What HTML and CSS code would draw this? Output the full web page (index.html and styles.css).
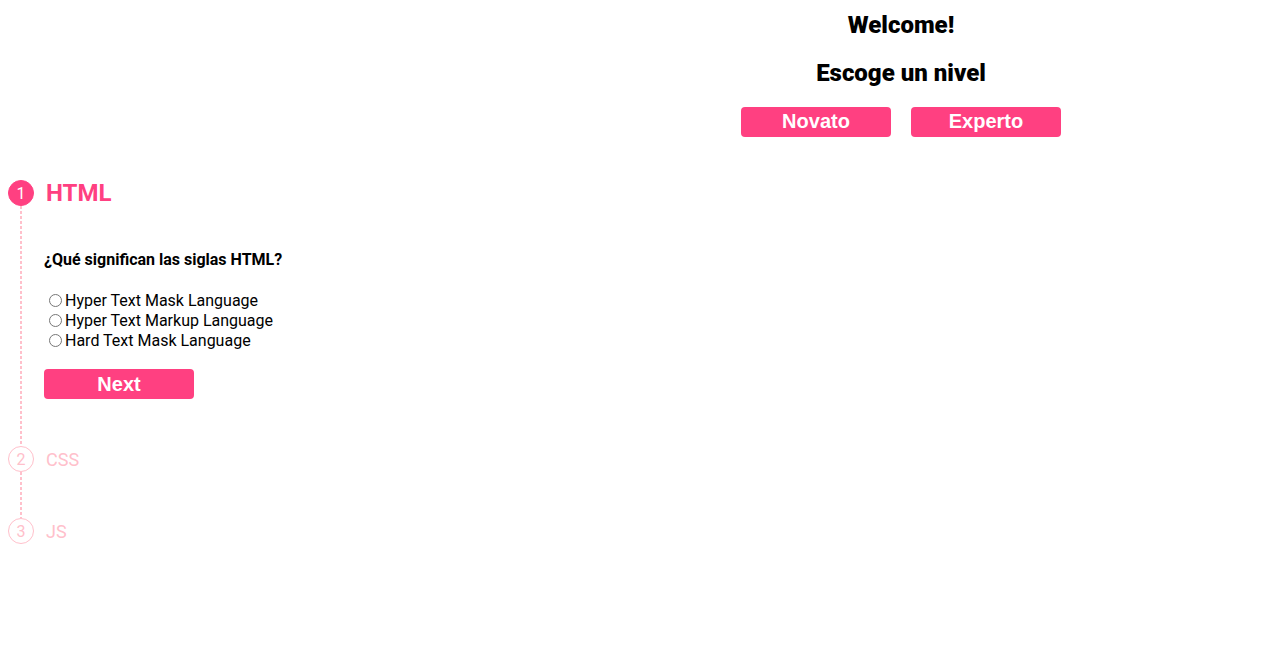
FILE: index.html
```html
<!DOCTYPE html>
<html lang="es">
<head>
<meta charset="utf-8">
<title>Quiz</title>
<link rel="stylesheet" href="styles.css">
</head>
<body>
<header class="welcome">
  <h1 class="title">Welcome!</h1>
  <h2 class="subtitle">Escoge un nivel</h2>
  <div class="levels">
    <button class="btn">Novato</button>
    <button class="btn">Experto</button>
  </div>
</header>
<section class="stepper">
  <div class="step active">
    <div class="step-head">
      <span class="step-num">1</span>
      <span class="step-label">HTML</span>
    </div>
    <div class="step-body">
      <p class="question">¿Qué significan las siglas HTML?</p>
      <div class="options">
        <label class="option"><input type="radio" name="q1">Hyper Text Mask Language</label>
        <label class="option"><input type="radio" name="q1">Hyper Text Markup Language</label>
        <label class="option"><input type="radio" name="q1">Hard Text Mask Language</label>
      </div>
      <button class="btn btn-next">Next</button>
    </div>
  </div>
  <div class="step">
    <div class="step-head">
      <span class="step-num">2</span>
      <span class="step-label">CSS</span>
    </div>
    <div class="step-body empty"></div>
  </div>
  <div class="step">
    <div class="step-head">
      <span class="step-num">3</span>
      <span class="step-label">JS</span>
    </div>
  </div>
</section>
</body>
</html>
```
FILE: styles.css
```css
html, body {
  margin: 0;
  padding: 0;
  background: #fff;
  font-family: Roboto, "Liberation Sans", sans-serif;
  color: #000;
}

.welcome {
  margin-left: 522px;
  padding-top: 9px;
  display: flex;
  flex-direction: column;
  align-items: center;
}

.title, .subtitle {
  margin: 0;
  font-size: 24px;
  line-height: 32px;
  font-weight: 900;
}

.subtitle {
  margin-top: 16px;
}

.levels {
  margin-top: 18px;
  display: flex;
  gap: 20px;
}

.btn {
  width: 150px;
  height: 30px;
  border: none;
  border-radius: 4px;
  background: #ff4081;
  color: #fff;
  font-family: "Liberation Sans", Arial, sans-serif;
  font-weight: 700;
  font-size: 20px;
  line-height: 28px;
  padding: 0 0 2px;
  cursor: pointer;
}

.stepper {
  margin-top: 43px;
  padding-left: 8px;
}

.step-head {
  display: flex;
  align-items: center;
  gap: 12px;
  height: 26px;
}

.step-num {
  box-sizing: border-box;
  width: 26px;
  height: 26px;
  border-radius: 50%;
  border: 1px solid #ffc0cb;
  color: #ffc0cb;
  display: flex;
  align-items: center;
  justify-content: center;
  font-size: 16px;
}

.step-label {
  color: #ffc0cb;
  font-size: 18px;
}

.active .step-num {
  background: #ff4081;
  border-color: #ff4081;
  color: #fff;
}

.active .step-label {
  color: #ff4081;
  font-size: 24px;
  font-weight: 700;
}

.step-body {
  margin-left: 12px;
  padding: 44px 0 47px 24px;
  background: repeating-linear-gradient(to bottom, #ffc0cb 0 3px, transparent 3px 5px) left top / 2px 100% no-repeat;
}

.step-body.empty {
  padding: 0;
  height: 46px;
}

.question {
  margin: 0;
  font-size: 16px;
  line-height: 20px;
  font-weight: 700;
}

.options {
  margin-top: 21px;
  display: flex;
  flex-direction: column;
}

.option {
  font-size: 16px;
  line-height: 20px;
  height: 20px;
}

.option input {
  margin: 3px 3px 0 5px;
  vertical-align: top;
  margin-top: 3px;
}

.step-body .btn {
  margin-top: 18px;
  display: block;
}

.step-body .btn-next {
  line-height: 30px;
  padding: 0;
}
```
